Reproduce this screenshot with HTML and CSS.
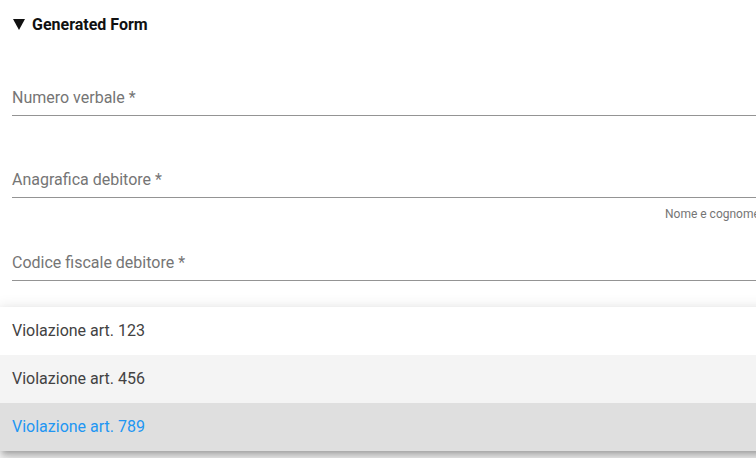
FILE: index.html
```html
<!DOCTYPE html>
<html lang="it">
<head>
<meta charset="utf-8">
<title>Generated Form</title>
<link rel="stylesheet" href="styles.css">
</head>
<body>
<div class="page">
  <div class="heading"><span class="caret"></span>Generated Form</div>
  <div class="field first"><span class="label">Numero verbale *</span></div>
  <div class="field"><span class="label">Anagrafica debitore *</span></div>
  <div class="helper">Nome e cognome del debitore</div>
  <div class="field after-helper"><span class="label">Codice fiscale debitore *</span></div>
  <ul class="menu">
    <li class="item">Violazione art. 123</li>
    <li class="item hover">Violazione art. 456</li>
    <li class="item selected">Violazione art. 789</li>
  </ul>
</div>
</body>
</html>
```
FILE: styles.css
```css
html, body {
  margin: 0;
  padding: 0;
  overflow: hidden;
  background: #fff;
}
body {
  font-family: Roboto, "Liberation Sans", sans-serif;
  width: 756px;
  height: 458px;
}
.page {
  padding: 0 0 0 12px;
  width: 900px;
}
.heading {
  display: flex;
  align-items: center;
  height: 48px;
  font-size: 16px;
  font-weight: 700;
  color: #111;
}
.caret {
  width: 0;
  height: 0;
  margin: 1px 7px 0 1px;
  border-left: 6px solid transparent;
  border-right: 6px solid transparent;
  border-top: 11px solid #111;
}
.field {
  margin-top: 54px;
  padding-bottom: 7px;
  border-bottom: 1px solid #949494;
  line-height: 20px;
  font-size: 16px;
  color: #757575;
}
.field.first { margin-top: 40px; }
.field.after-helper { margin-top: 31px; }
.helper {
  margin-top: 8px;
  padding-left: 653px;
  font-size: 12px;
  line-height: 16px;
  color: #757575;
  white-space: nowrap;
}
.menu {
  list-style: none;
  margin: 26px 0 0 -12px;
  padding: 0;
  background: #fff;
  box-shadow: 0 5px 5px -3px rgba(0,0,0,.2), 0 8px 10px 1px rgba(0,0,0,.14), 0 3px 14px 2px rgba(0,0,0,.12);
}
.item {
  height: 48px;
  line-height: 48px;
  padding-left: 12px;
  font-size: 16px;
  color: #424242;
}
.item.hover { background: #f4f4f4; }
.item.selected { background: #dfdfdf; color: #2196f3; }
```
